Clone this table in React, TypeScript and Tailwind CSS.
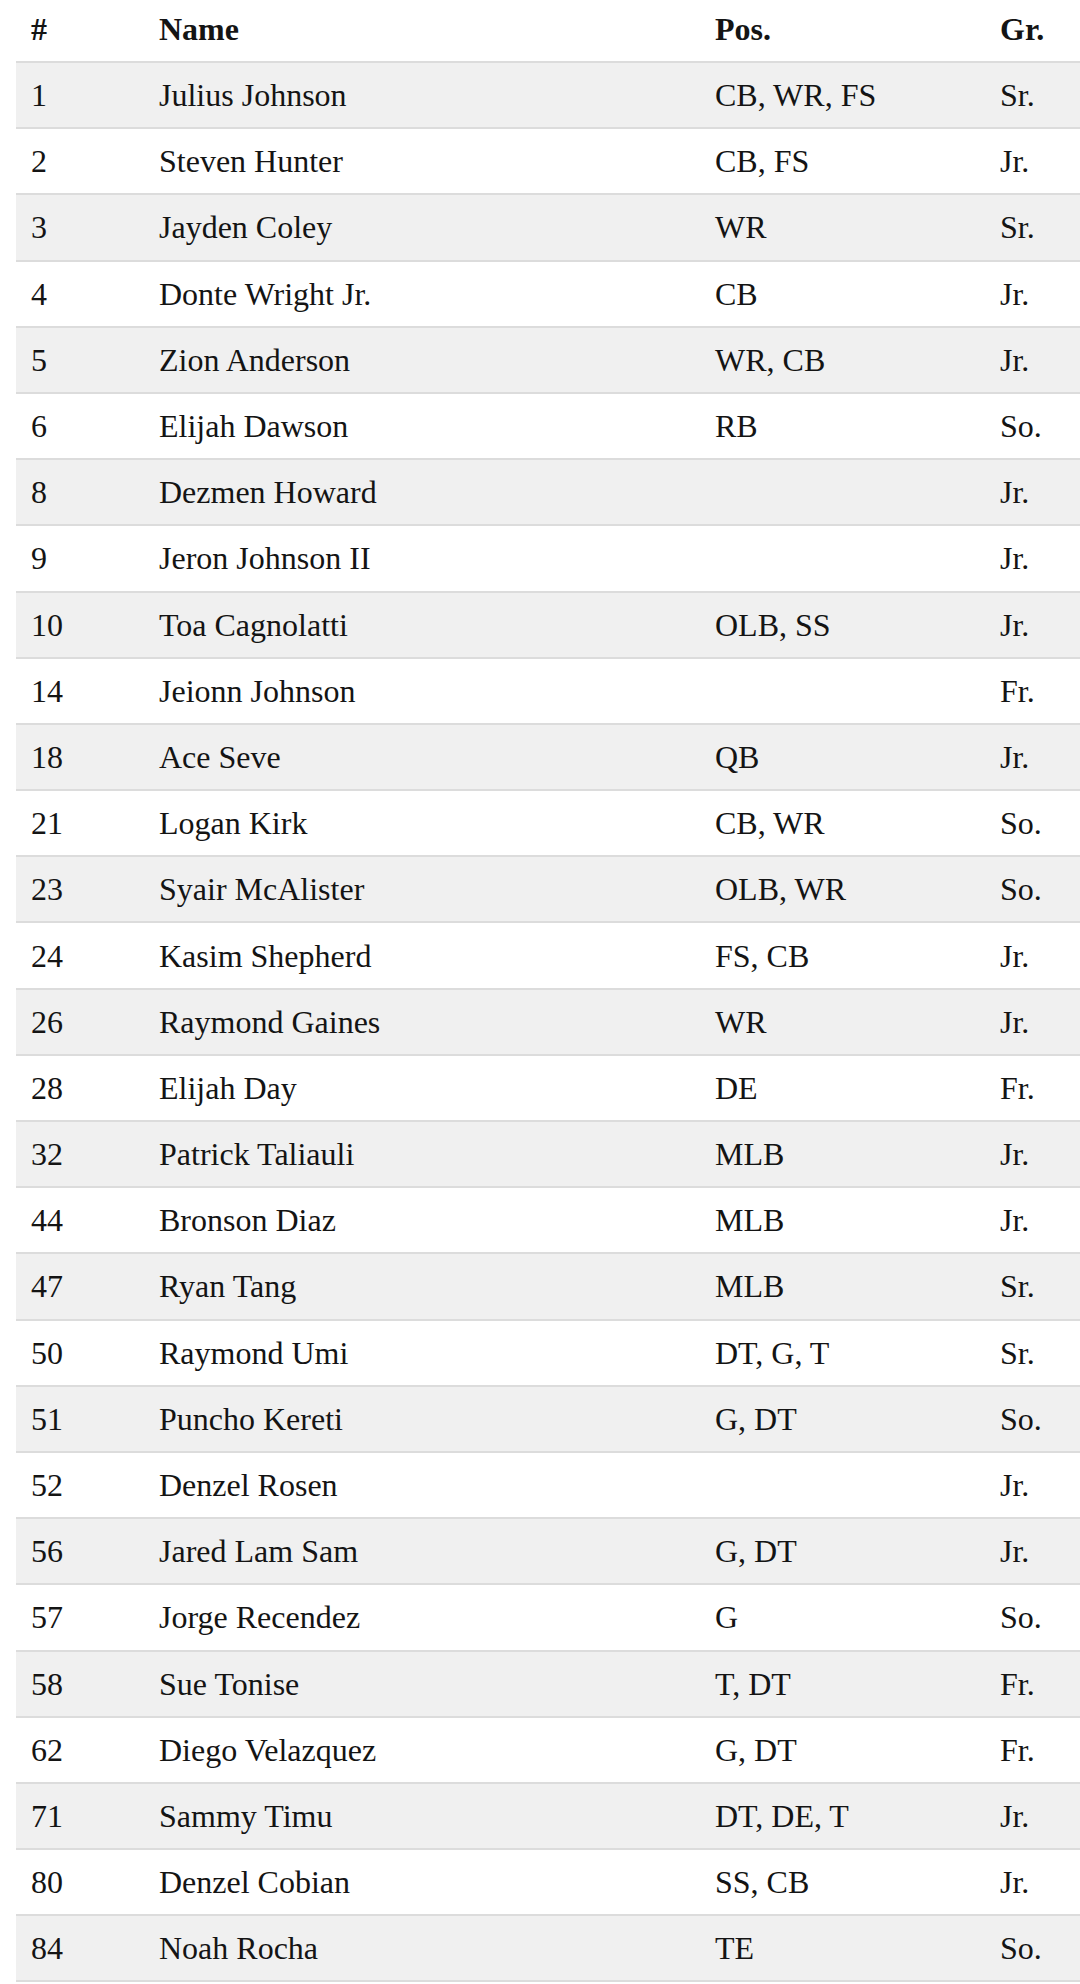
const players: [string, string, string, string][] = [
  ["1", "Julius Johnson", "CB, WR, FS", "Sr."],
  ["2", "Steven Hunter", "CB, FS", "Jr."],
  ["3", "Jayden Coley", "WR", "Sr."],
  ["4", "Donte Wright Jr.", "CB", "Jr."],
  ["5", "Zion Anderson", "WR, CB", "Jr."],
  ["6", "Elijah Dawson", "RB", "So."],
  ["8", "Dezmen Howard", "", "Jr."],
  ["9", "Jeron Johnson II", "", "Jr."],
  ["10", "Toa Cagnolatti", "OLB, SS", "Jr."],
  ["14", "Jeionn Johnson", "", "Fr."],
  ["18", "Ace Seve", "QB", "Jr."],
  ["21", "Logan Kirk", "CB, WR", "So."],
  ["23", "Syair McAlister", "OLB, WR", "So."],
  ["24", "Kasim Shepherd", "FS, CB", "Jr."],
  ["26", "Raymond Gaines", "WR", "Jr."],
  ["28", "Elijah Day", "DE", "Fr."],
  ["32", "Patrick Taliauli", "MLB", "Jr."],
  ["44", "Bronson Diaz", "MLB", "Jr."],
  ["47", "Ryan Tang", "MLB", "Sr."],
  ["50", "Raymond Umi", "DT, G, T", "Sr."],
  ["51", "Puncho Kereti", "G, DT", "So."],
  ["52", "Denzel Rosen", "", "Jr."],
  ["56", "Jared Lam Sam", "G, DT", "Jr."],
  ["57", "Jorge Recendez", "G", "So."],
  ["58", "Sue Tonise", "T, DT", "Fr."],
  ["62", "Diego Velazquez", "G, DT", "Fr."],
  ["71", "Sammy Timu", "DT, DE, T", "Jr."],
  ["80", "Denzel Cobian", "SS, CB", "Jr."],
  ["84", "Noah Rocha", "TE", "So."],
];

export default function App() {
  return (
    <div className="min-h-[1984px] bg-white pl-4 font-['Liberation_Serif',Georgia,serif] text-[32px] text-[#141414]">
      <table className="w-[1064px] table-fixed border-collapse text-left">
        <colgroup>
          <col className="w-[143px]" />
          <col className="w-[556px]" />
          <col className="w-[285px]" />
          <col />
        </colgroup>
        <thead>
          <tr className="h-[62px]">
            <th className="pl-[15px] pb-[4px] font-bold">#</th>
            <th className="pb-[4px] font-bold">Name</th>
            <th className="pb-[4px] font-bold">Pos.</th>
            <th className="pb-[4px] font-bold">Gr.</th>
          </tr>
        </thead>
        <tbody>
          {players.map(([num, name, pos, grade], i) => (
            <tr
              key={num}
              className={`h-[66.2px] border-y-2 border-[#dcdcdc] ${i % 2 === 0 ? "bg-[#f0f0f0]" : "bg-white"}`}
            >
              <td className="pl-[15px]">{num}</td>
              <td>{name}</td>
              <td>{pos}</td>
              <td>{grade}</td>
            </tr>
          ))}
        </tbody>
      </table>
    </div>
  );
}
